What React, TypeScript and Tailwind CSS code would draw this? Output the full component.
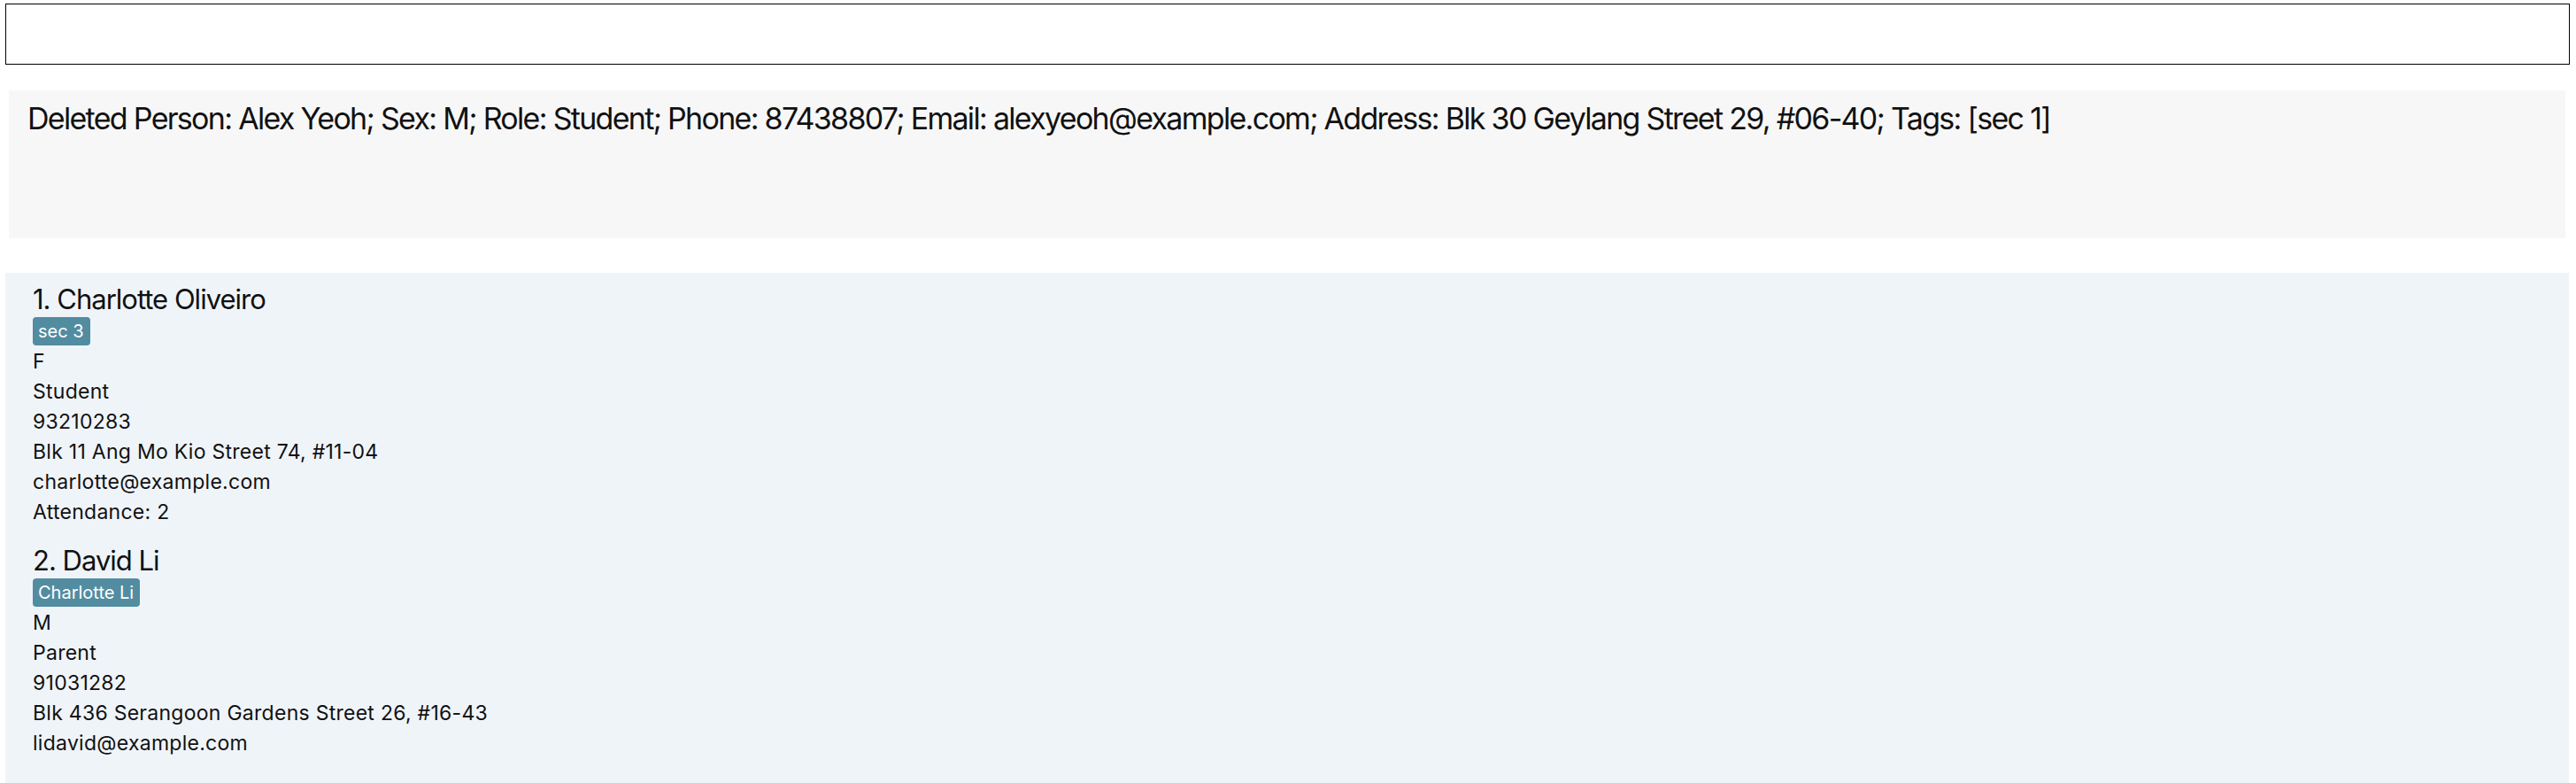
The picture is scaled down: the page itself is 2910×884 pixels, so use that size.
import React from 'react';

type Person = {
  name: string;
  tags: string[];
  sex: string;
  role: string;
  phone: string;
  address: string;
  email: string;
  attendance?: number;
};

const persons: Person[] = [
  {
    name: 'Charlotte Oliveiro',
    tags: ['sec 3'],
    sex: 'F',
    role: 'Student',
    phone: '93210283',
    address: 'Blk 11 Ang Mo Kio Street 74, #11-04',
    email: 'charlotte@example.com',
    attendance: 2,
  },
  {
    name: 'David Li',
    tags: ['Charlotte Li'],
    sex: 'M',
    role: 'Parent',
    phone: '91031282',
    address: 'Blk 436 Serangoon Gardens Street 26, #16-43',
    email: 'lidavid@example.com',
  },
];

const PersonCard: React.FC<{ person: Person; index: number }> = ({ person, index }) => (
  <div className="flex flex-col">
    <div className="text-[31px] leading-[38px] tracking-[-1px] text-[#111]">
      {index}. {person.name}
    </div>
    <div className="flex gap-1.5 mt-[1px] mb-[1px]">
      {person.tags.map((tag) => (
        <span
          key={tag}
          className="bg-[#528ca1] text-white text-[20px] leading-[32px] pl-[6px] pr-[7px] rounded-[4px]"
        >
          {tag}
        </span>
      ))}
    </div>
    <div className="text-[23px] leading-[34px] tracking-[0.27px] text-[#111]">
      <div>{person.sex}</div>
      <div>{person.role}</div>
      <div>{person.phone}</div>
      <div>{person.address}</div>
      <div>{person.email}</div>
      {person.attendance !== undefined && <div>Attendance: {person.attendance}</div>}
    </div>
  </div>
);

export default function App() {
  return (
    <div
      className="w-[2910px] h-[884px] bg-white flex flex-col overflow-hidden"
      style={{ fontFamily: 'Inter, "Noto Sans", sans-serif' }}
    >
      {/* command box */}
      <div className="ml-[6px] mr-[7px] mt-[4px] h-[69px] border-[1.5px] border-black bg-white" />

      {/* result display */}
      <div className="ml-[10px] mr-[12px] mt-[29px] h-[167px] bg-[#f7f7f7] pl-[21px] pt-[10px]">
        <p className="text-[34px] leading-[44px] text-[#111] tracking-[-1.7px] whitespace-nowrap">
          Deleted Person: Alex Yeoh; Sex: M; Role: Student; Phone: 87438807; Email: alexyeoh@example.com; Address: Blk 30 Geylang Street 29, #06-40; Tags: [sec 1]
        </p>
      </div>

      {/* person list */}
      <div className="ml-[6px] mr-[8px] mt-[39px] flex-1 bg-[#eff4f9] pl-[31px] pt-[11px] flex flex-col gap-[19px]">
        {persons.map((p, i) => (
          <PersonCard key={p.name} person={p} index={i + 1} />
        ))}
      </div>
    </div>
  );
}
